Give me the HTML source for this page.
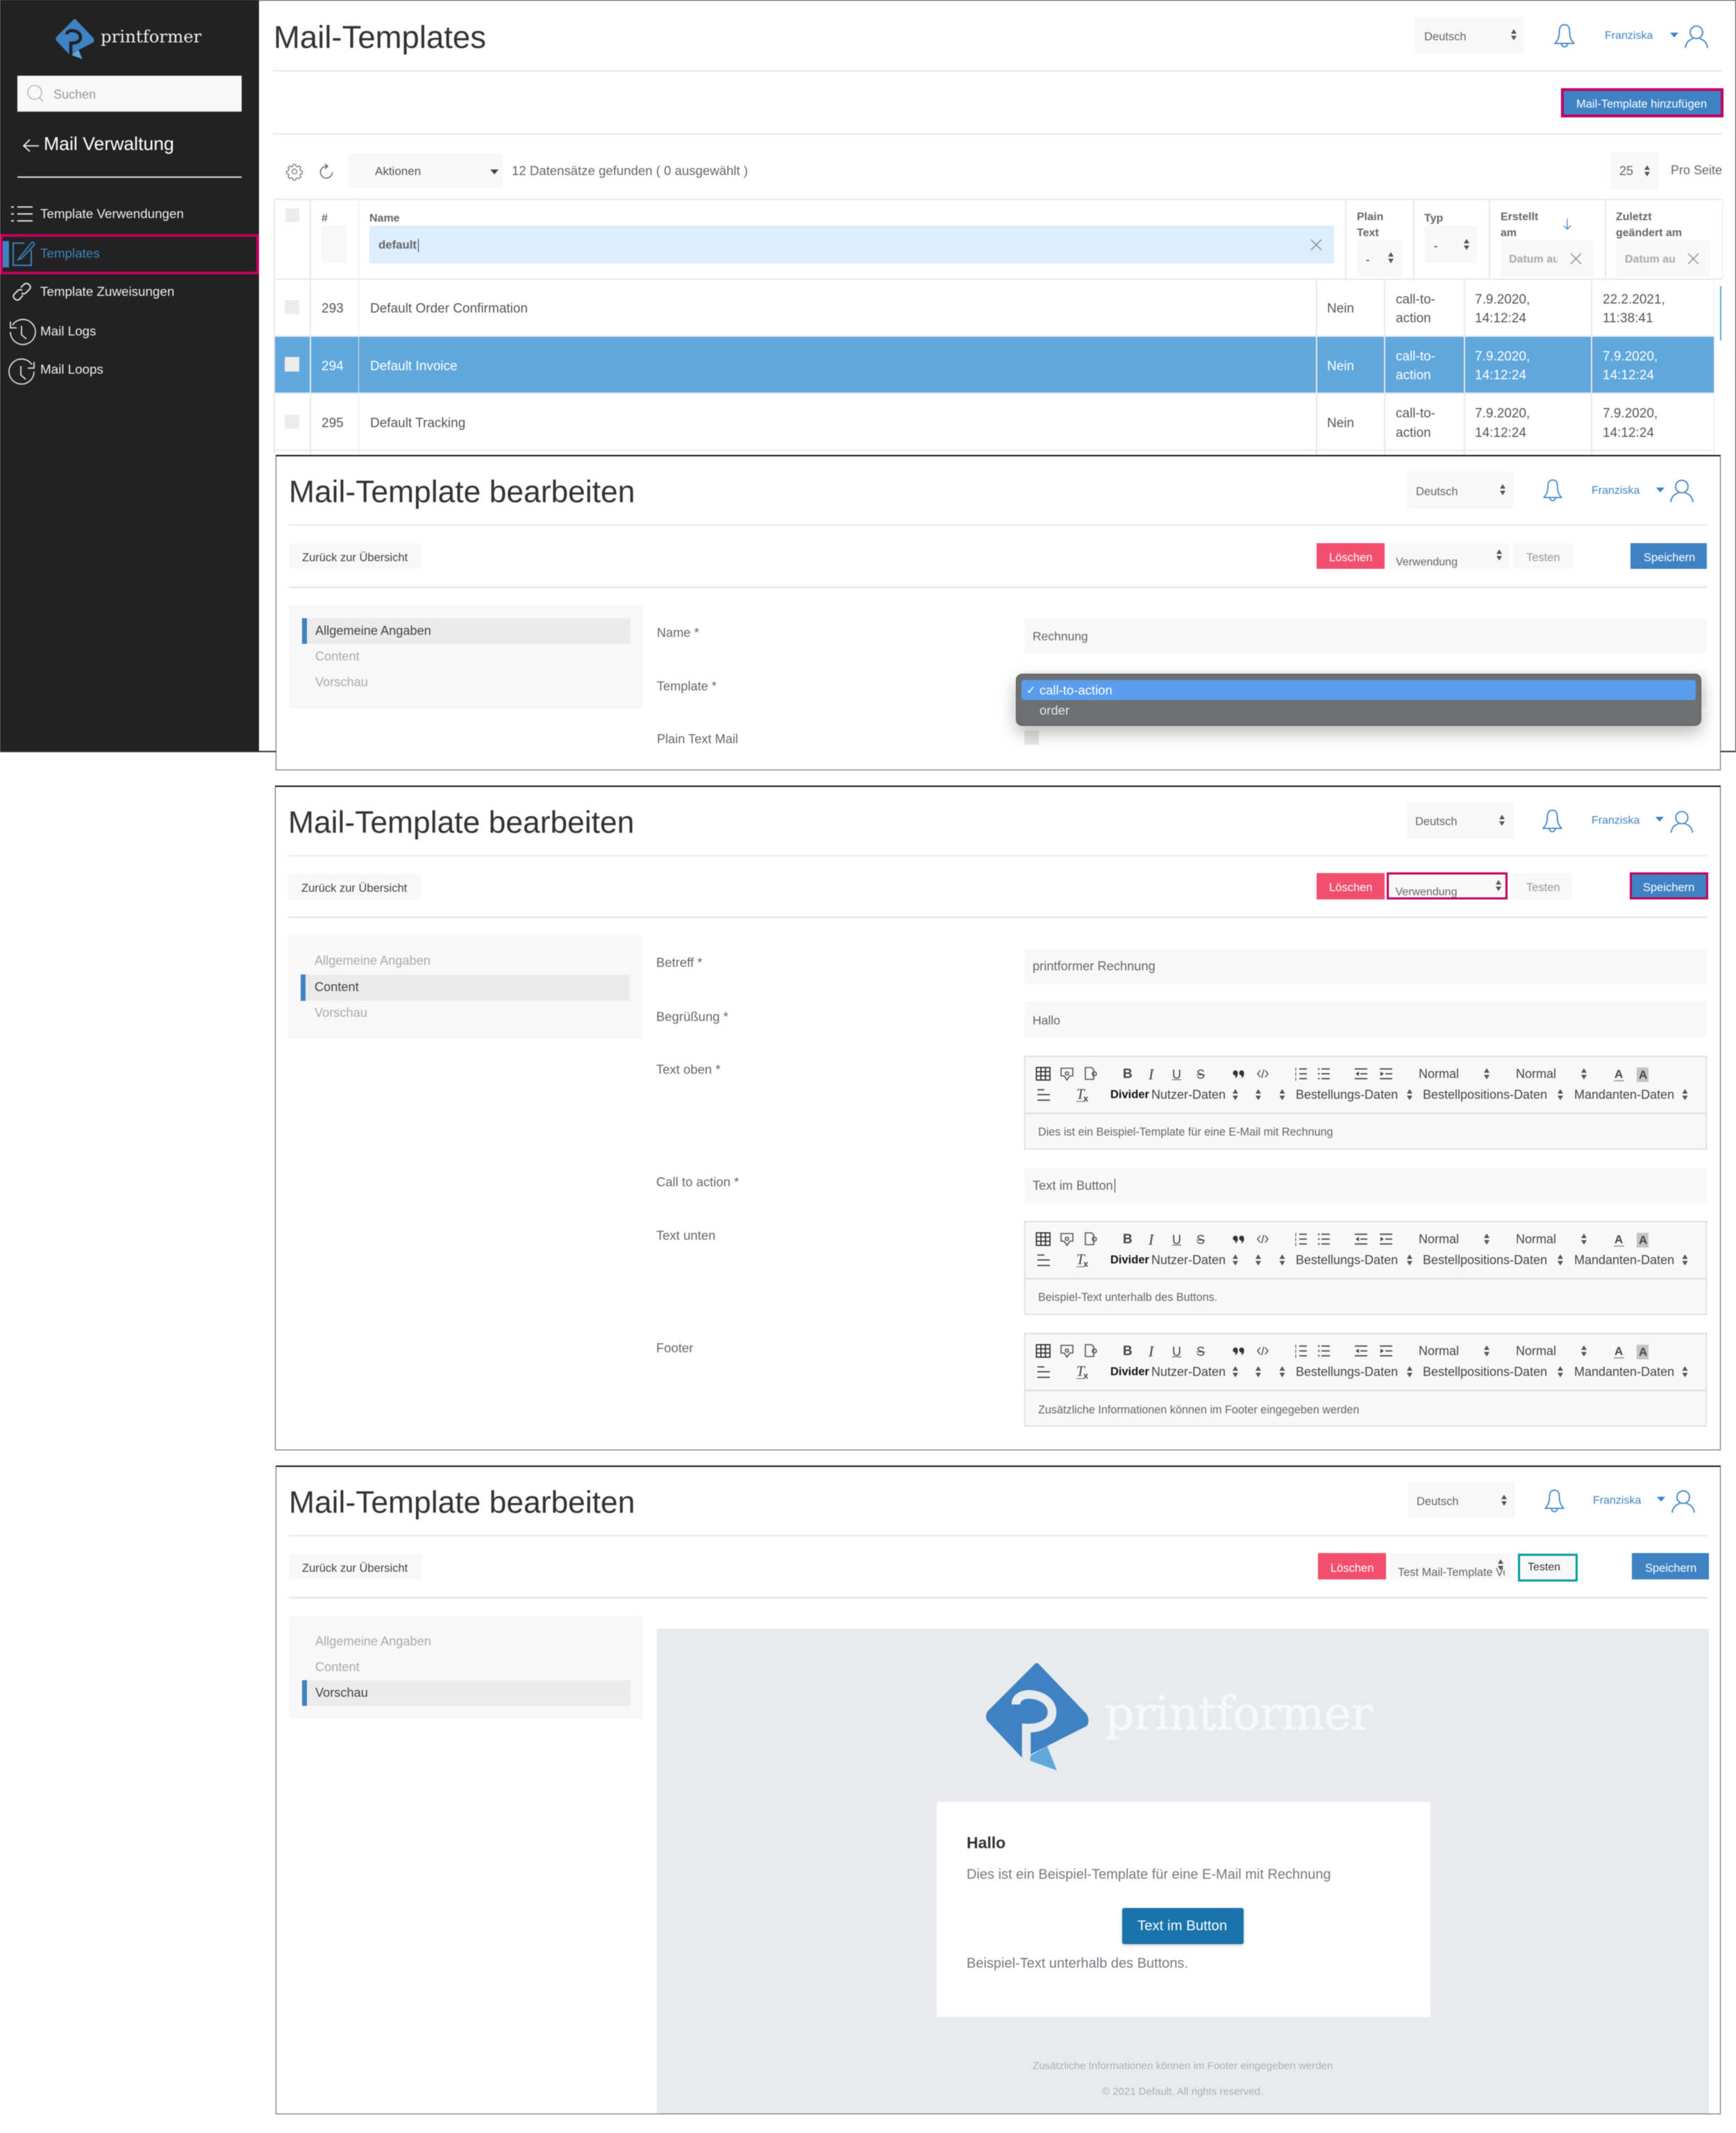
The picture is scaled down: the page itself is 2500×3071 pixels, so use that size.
<!DOCTYPE html>
<html lang="de"><head><meta charset="utf-8"><title>Mail-Templates</title>
<style>
html,body{margin:0;padding:0;width:2500px;height:3071px;overflow:hidden;background:#fff}
#p{position:absolute;left:0;top:0;width:2500px;height:3071px;overflow:hidden;font:18px "Liberation Sans",sans-serif;color:#666;filter:blur(.55px)}
.x{position:absolute}
.t{position:absolute;white-space:nowrap;line-height:0;height:0}
.g{background:#f8f8f8}.l{background:#e9e9e9}.bl{background:#3f82c4}.rd{background:#f24f6e}
.h{font-size:44.400px;color:#333;margin-top:1px}
.w{color:#fff}.s{font-size:16.5px;margin-top:1.5px}.bd{font-weight:700;font-size:16px;color:#666;margin-top:1.5px}
.b{color:#3f82c4;font-size:16px;margin-top:1.5px}
.m{font-size:18.800px;color:#eee}
.c{font-size:19px;color:#555;margin-top:1.5px}
.cw{font-size:19px;color:#fff;margin-top:1.5px}
.lb{font-size:18.200px;color:#666}
.ni{font-size:18.200px;color:#aaa}.na{font-size:18.200px;color:#444}
.v{font-size:17.5px;color:#666}.v2{font-size:18.300px;color:#666}
svg{position:absolute;overflow:visible}
.ed{position:absolute;left:1475px;width:983px;background:#f8f8f8;box-shadow:inset 0 0 0 1.5px #d8d8d8}
.ed .t{font-size:18px;color:#444}
.ed .d{font-weight:700;font-size:16.5px;color:#111}
.ed .n{left:20px;top:109.500px;font-size:16.200px;color:#666}
.ed .sp{position:absolute;left:0;top:82px;width:983px;height:2px;background:#ddd}
</style></head><body>
<svg width="0" height="0" style="position:absolute">
<symbol id="ud" viewBox="0 0 8 16"><path d="M4 0L8 6.500H0zM4 16L8 9.500H0z" fill="#555"/></symbol>
<symbol id="car" viewBox="0 0 12 7"><path d="M0 0H12L6 7z" fill="currentColor"/></symbol>
<symbol id="bell" viewBox="0 0 30 35"><path d="M15 1.500C8 1.500 7.500 8 7.500 14 7.500 21 4 25 1.500 28.500H28.500C26 25 22.500 21 22.500 14 22.500 8 22 1.500 15 1.500ZM10.500 28.500a4.500 5 0 0 0 9 0" fill="none" stroke="#3f82c4" stroke-width="1.800"/></symbol>
<symbol id="user" viewBox="0 0 34 33"><circle cx="17" cy="10.500" r="9" fill="none" stroke="#3f82c4" stroke-width="1.800"/><path d="M1 33C2 25 7 21 12.500 19.500M33 33C32 25 27 21 21.500 19.500" fill="none" stroke="#3f82c4" stroke-width="1.800"/></symbol>
<symbol id="xx" viewBox="0 0 17 17"><path d="M1 1L16 16M16 1L1 16" stroke="#888" stroke-width="1.300" fill="none"/></symbol>
<symbol id="logo" viewBox="0 0 148 155">
<path d="M63.500 134L88 120L102 155L63.500 141Z" fill="#60a7dc"/>
<path d="M69 3Q73 -2 77 3L145 74Q150 84 145 91L64 132L52 137L2 84Q-2 78 2 70Z" fill="#3f82c4"/>
<path d="M43 60C43 49 54 44 68 46C86 49 96 60 95 73C94 87 78 95 58 94L58 137" fill="none" stroke="currentColor" stroke-width="12.500"/>
</symbol>
<symbol id="tb" viewBox="0 0 983 82">
<g fill="none" stroke="#222" stroke-width="1.600"><rect x="17.500" y="17" width="19.500" height="18"/><path d="M24 17V35M30.500 17V35M17.500 23H37M17.500 29H37"/></g>
<g fill="none" stroke="#555" stroke-width="1.600"><path d="M53 18H70V29H65.500L61.500 35 57.500 29H53Z"/><circle cx="61.500" cy="25.500" r="2.300"/><path d="M88 17H97L100 20V34H88Z"/><circle cx="101" cy="26" r="3"/></g>
<path d="M304 21a3.500 3.500 0 0 1 3.500 3.500v2c0 3-2 5-4 5.500l1-3.500a3.500 3.500 0 0 1-.5-7.500zM313 21a3.500 3.500 0 0 1 3.500 3.500v2c0 3-2 5-4 5.500l1-3.500a3.500 3.500 0 0 1-.5-7.500z" fill="#333"/>
<path d="M340 21L336 26 340 31M347 21L351 26 347 31M345 20L342 32" fill="none" stroke="#444" stroke-width="1.400"/>
<g fill="none" stroke="#444" stroke-width="1.800"><path d="M396 19h11M396 26h11M396 33h11"/><path d="M428 19h12M428 26h12M428 33h12M423 19h2.500M423 26h2.500M423 33h2.500"/><path d="M476 19h18M484 26h10M476 33h18M512 19h18M520 26h10M512 33h18"/><path d="M19 49h10M19 56h18M19 64h18"/></g>
<path d="M391 17v5M391 24v5M391 31v5" fill="none" stroke="#444" stroke-width="1"/>
<path d="M482 23L477 26 482 29zM513 23L518 26 513 29z" fill="#444"/>
<rect x="849" y="35" width="15" height="2" fill="#aaa"/>
<rect x="882" y="17" width="17" height="21" fill="#c4c4c4"/>
<rect x="75" y="65" width="12" height="1.500" fill="#999"/>
<use href="#ud" x="662" y="18" width="8" height="16"/><use href="#ud" x="802" y="18" width="8" height="16"/>
<use href="#ud" x="300" y="48" width="8" height="16"/><use href="#ud" x="333" y="48" width="8" height="16"/><use href="#ud" x="367.500" y="48" width="8" height="16"/><use href="#ud" x="551" y="48" width="8" height="16"/><use href="#ud" x="768" y="48" width="8" height="16"/><use href="#ud" x="947.500" y="48" width="8" height="16"/>
</symbol>
</svg>
<div id="p">

<!-- first screenshot frame -->
<div class="x" style="left:0;top:0;width:2498px;height:1081px;border:1px solid #333"></div>

<!-- header -->
<div class="t h" style="left:394px;top:53px;font-size:45.500px">Mail-Templates</div>
<div class="x l" style="left:393px;top:101px;width:2087px;height:2px"></div>
<div class="x l" style="left:393px;top:192px;width:2087px;height:2px"></div>
<div class="x g" style="left:2038px;top:24px;width:157px;height:53px"></div>
<div class="t s" style="left:2051px;top:51px">Deutsch</div>
<svg style="left:2176px;top:42px" width="8" height="16"><use href="#ud"/></svg>
<svg style="left:2238px;top:34px" width="30" height="35"><use href="#bell"/></svg>
<div class="t b" style="left:2311px;top:50px">Franziska</div>
<svg style="left:2405px;top:47px;color:#3f82c4" width="12" height="7"><use href="#car"/></svg>
<svg style="left:2426px;top:36px" width="34" height="33"><use href="#user"/></svg>
<div class="x" style="left:2248px;top:127px;width:234px;height:42px;box-sizing:border-box;border:4px solid #c2005d;background:#3f82c4"></div>
<div class="t w s" style="left:2270px;top:148px">Mail-Template hinzufügen</div>

<!-- toolbar -->
<svg style="left:412px;top:235px" width="25" height="24" viewBox="-1 -1 27 27"><path d="M10 1h4l.6 3 2.400 1 2.600-1.700 2.800 2.800-1.700 2.600 1 2.400 3 .6v4l-3 .6-1 2.400 1.700 2.600-2.800 2.800-2.600-1.700-2.400 1-.6 3h-4l-.6-3-2.400-1-2.600 1.700-2.800-2.800 1.700-2.600-1-2.400-3-.6v-4l3-.6 1-2.400-1.700-2.600 2.800-2.800 2.600 1.700 2.400-1z" fill="none" stroke="#666" stroke-width="1.300"/><circle cx="12" cy="12.500" r="4" fill="none" stroke="#666" stroke-width="1.300"/></svg>
<svg style="left:460px;top:235px" width="20" height="24"><path d="M11 4.500A8.500 8.500 0 1 0 18.500 13" fill="none" stroke="#666" stroke-width="1.500"/><path d="M8 1l4 3.500-4 3.500" fill="none" stroke="#666" stroke-width="1.500"/></svg>
<div class="x g" style="left:501px;top:221px;width:223px;height:50px"></div>
<div class="t" style="left:540px;top:247px;font-size:17px;color:#555">Aktionen</div>
<svg style="left:706px;top:244px;color:#444" width="12" height="7"><use href="#car"/></svg>
<div class="t" style="left:737px;top:246px;font-size:18.600px">12 Datensätze gefunden ( 0 ausgewählt )</div>
<div class="x g" style="left:2319px;top:219px;width:69px;height:54px"></div>
<div class="t" style="left:2332px;top:246px;font-size:18px">25</div>
<svg style="left:2368px;top:238px" width="8" height="16"><use href="#ud"/></svg>
<div class="t" style="left:2406px;top:245px;font-size:18px">Pro Seite</div>

<!-- table head -->
<div class="x l" style="left:394px;top:286px;width:2086px;height:2px"></div>
<div class="x l" style="left:394px;top:401px;width:2086px;height:2px"></div>
<div class="x l" style="left:394px;top:287px;width:1.500px;height:115px"></div>
<div class="x l" style="left:446px;top:287px;width:1.500px;height:115px"></div>
<div class="x l" style="left:515.500px;top:287px;width:1.500px;height:115px"></div>
<div class="x l" style="left:1937px;top:287px;width:1.500px;height:115px"></div>
<div class="x l" style="left:2035px;top:287px;width:1.500px;height:115px"></div>
<div class="x l" style="left:2144px;top:287px;width:1.500px;height:115px"></div>
<div class="x l" style="left:2311px;top:287px;width:1.500px;height:115px"></div>
<div class="x l" style="left:2479.500px;top:287px;width:1.500px;height:115px"></div>
<div class="x" style="left:411px;top:300px;width:20px;height:20px;background:#ececec"></div>
<div class="t bd" style="left:463px;top:313px">#</div>
<div class="x g" style="left:463px;top:325px;width:36px;height:54px"></div>
<div class="t bd" style="left:532px;top:313px">Name</div>
<div class="x" style="left:532px;top:325px;width:1389px;height:54px;background:#dcedfd"></div>
<div class="t" style="left:545px;top:353px;font-size:16.800px;font-weight:700;color:#666">default</div>
<div class="x" style="left:602px;top:344px;width:1px;height:19px;background:#333"></div>
<svg style="left:1887px;top:344px" width="17" height="17"><use href="#xx"/></svg>
<div class="t bd" style="left:1954px;top:311px">Plain</div>
<div class="t bd" style="left:1954px;top:334px">Text</div>
<div class="x g" style="left:1954px;top:345px;width:65px;height:54px"></div>
<div class="t bd" style="left:1967px;top:373px">-</div>
<svg style="left:1999px;top:363px" width="8" height="16"><use href="#ud"/></svg>
<div class="t bd" style="left:2051px;top:313px">Typ</div>
<div class="x g" style="left:2051px;top:325px;width:76px;height:54px"></div>
<div class="t bd" style="left:2065px;top:353px">-</div>
<svg style="left:2108px;top:344px" width="8" height="16"><use href="#ud"/></svg>
<div class="t bd" style="left:2161px;top:311px">Erstellt</div>
<div class="t bd" style="left:2161px;top:334px">am</div>
<svg style="left:2251px;top:315px" width="12" height="16"><path d="M6 0V15M1 10L6 15 11 10" fill="none" stroke="#3f82c4" stroke-width="1.300"/></svg>
<div class="x g" style="left:2161px;top:345px;width:134px;height:54px"></div>
<div class="x" style="left:2173px;top:360px;width:70px;height:26px;overflow:hidden"><div class="t" style="left:0;top:14px;font-size:16px;font-weight:700;color:#aaa">Datum aus</div></div>
<svg style="left:2261px;top:364px" width="17" height="17"><use href="#xx"/></svg>
<div class="t bd" style="left:2327px;top:311px">Zuletzt</div>
<div class="t bd" style="left:2327px;top:334px">geändert am</div>
<div class="x g" style="left:2327px;top:345px;width:136px;height:54px"></div>
<div class="x" style="left:2340px;top:360px;width:73px;height:26px;overflow:hidden"><div class="t" style="left:0;top:14px;font-size:16px;font-weight:700;color:#aaa">Datum aus</div></div>
<svg style="left:2430px;top:364px" width="17" height="17"><use href="#xx"/></svg>

<!-- table body -->
<div class="x" style="left:394px;top:484px;width:2074px;height:82px;background:#60a7dc"></div>
<div class="x l" style="left:394px;top:483px;width:2074px;height:2px"></div>
<div class="x" style="left:394px;top:565px;width:2074px;height:2px;background:#dfe7ee"></div>
<div class="x l" style="left:394px;top:647px;width:2074px;height:2px"></div>
<div class="x l" style="left:394px;top:402px;width:1.500px;height:253px"></div>
<div class="x" style="left:446px;top:402px;width:1.500px;height:253px;background:#e6e9ec"></div>
<div class="x" style="left:515.500px;top:402px;width:1.500px;height:253px;background:#e6e9ec"></div>
<div class="x" style="left:1895px;top:402px;width:1.500px;height:253px;background:#e6e9ec"></div>
<div class="x" style="left:1993px;top:402px;width:1.500px;height:253px;background:#e6e9ec"></div>
<div class="x" style="left:2108px;top:402px;width:1.500px;height:253px;background:#e6e9ec"></div>
<div class="x" style="left:2291px;top:402px;width:1.500px;height:253px;background:#e6e9ec"></div>
<div class="x l" style="left:2467.500px;top:402px;width:1.500px;height:253px"></div>
<div class="x" style="left:2477px;top:412px;width:2px;height:78px;background:#5fa3d8"></div>
<div class="x" style="left:410px;top:432px;width:21px;height:20px;background:#ececec"></div>
<div class="x" style="left:410px;top:514px;width:21px;height:21px;background:#ececec"></div>
<div class="x" style="left:410px;top:597px;width:21px;height:20px;background:#ececec"></div>

<div class="t c" style="left:463px;top:443px">293</div>
<div class="t c" style="left:533px;top:443px">Default Order Confirmation</div>
<div class="t c" style="left:1911px;top:443px">Nein</div>
<div class="t c" style="left:2010px;top:430px">call-to-</div>
<div class="t c" style="left:2010px;top:457px">action</div>
<div class="t c" style="left:2124px;top:430px">7.9.2020,</div>
<div class="t c" style="left:2124px;top:457px">14:12:24</div>
<div class="t c" style="left:2308px;top:430px">22.2.2021,</div>
<div class="t c" style="left:2308px;top:457px">11:38:41</div>

<div class="t cw" style="left:463px;top:526px">294</div>
<div class="t cw" style="left:533px;top:526px">Default Invoice</div>
<div class="t cw" style="left:1911px;top:526px">Nein</div>
<div class="t cw" style="left:2010px;top:512px">call-to-</div>
<div class="t cw" style="left:2010px;top:539px">action</div>
<div class="t cw" style="left:2124px;top:512px">7.9.2020,</div>
<div class="t cw" style="left:2124px;top:539px">14:12:24</div>
<div class="t cw" style="left:2308px;top:512px">7.9.2020,</div>
<div class="t cw" style="left:2308px;top:539px">14:12:24</div>

<div class="t c" style="left:463px;top:608px">295</div>
<div class="t c" style="left:533px;top:608px">Default Tracking</div>
<div class="t c" style="left:1911px;top:608px">Nein</div>
<div class="t c" style="left:2010px;top:594px">call-to-</div>
<div class="t c" style="left:2010px;top:622px">action</div>
<div class="t c" style="left:2124px;top:594px">7.9.2020,</div>
<div class="t c" style="left:2124px;top:622px">14:12:24</div>
<div class="t c" style="left:2308px;top:594px">7.9.2020,</div>
<div class="t c" style="left:2308px;top:622px">14:12:24</div>

<!-- sidebar -->
<div class="x" style="left:0;top:0;width:373px;height:1082px;background:#222;border-top:1px solid #000;box-sizing:border-box"></div>
<svg style="left:79px;top:27px;color:#222" width="58" height="58"><use href="#logo" width="58" height="58"/></svg>
<div class="t" style="left:145px;top:53px;font:24.400px 'DejaVu Serif',serif;line-height:0;color:#eee">printformer</div>
<div class="x" style="left:25px;top:109px;width:323px;height:52px;background:#f8f8f8;border-bottom:1px solid #bbb;box-sizing:border-box"></div>
<svg style="left:0;top:0" width="373" height="600">
<circle cx="50" cy="133" r="10" fill="none" stroke="#aaa" stroke-width="1.300"/><path d="M57 141L62 146" stroke="#aaa" stroke-width="1.300"/>
<path d="M34 210H56M43 201L34 210 43 218" fill="none" stroke="#eee" stroke-width="1.800"/>
<path d="M25 298H47M25 308H47M25 318H47" stroke="#ddd" stroke-width="2"/><path d="M16 298H20M16 308H20M16 318H20" stroke="#ddd" stroke-width="2"/>
<path d="M35 350H19V382H45V360" fill="none" stroke="#3f82c4" stroke-width="2"/><path d="M28 371L44 351Q47 347 49 350 50 352 48 354L31 372 26 374Z" fill="none" stroke="#3f82c4" stroke-width="1.800"/>
<g fill="none" stroke="#ddd" stroke-width="2"><path d="M30 414L35 409Q38 407 41 409L43 411Q45 414 42 417L37 422Q34 424 31 422"/><path d="M33 425L28 431Q25 433 22 431L20 429Q18 426 21 423L26 418Q29 416 32 418"/></g>
<g fill="none" stroke="#ddd" stroke-width="1.800"><path d="M18 468A18 18 0 1 1 15 478"/><path d="M15 463V472H24"/><path d="M31 469V482L38 488"/><path d="M46 525A18 18 0 1 0 49 535"/><path d="M49 521V530H40"/><path d="M30 527V540L37 546"/></g>
</svg>
<div class="t" style="left:77px;top:136px;font-size:18px;color:#999">Suchen</div>
<div class="t" style="left:63px;top:207px;font-size:26.600px;color:#fff">Mail Verwaltung</div>
<div class="x" style="left:25px;top:254px;width:323px;height:2px;background:#ddd"></div>
<div class="x" style="left:0;top:337px;width:373px;height:58px;box-sizing:border-box;border:4.500px solid #c2005d"></div>
<div class="x bl" style="left:4px;top:347px;width:9px;height:38px"></div>
<div class="t m" style="left:58px;top:308px">Template Verwendungen</div>
<div class="t m" style="left:58px;top:365px;color:#3f82c4">Templates</div>
<div class="t m" style="left:58px;top:420px">Template Zuweisungen</div>
<div class="t m" style="left:58px;top:477px">Mail Logs</div>
<div class="t m" style="left:58px;top:532px">Mail Loops</div>
<div class="x" style="left:0;top:1081px;width:2499px;height:1px;background:#333"></div>

<!-- panel 2 -->
<div class="x" style="left:397px;top:655px;width:2081px;height:454px;box-sizing:border-box;background:#fff;border:1.500px solid #555;border-top:2.500px solid #111"></div>
<div class="t h" style="left:416px;top:708px">Mail-Template bearbeiten</div>
<div class="x l" style="left:416px;top:755px;width:2042px;height:2px"></div>
<div class="x g" style="left:2026px;top:679px;width:154px;height:53px"></div>
<div class="t s" style="left:2039px;top:706px">Deutsch</div>
<svg style="left:2160px;top:697px" width="8" height="16"><use href="#ud"/></svg>
<svg style="left:2222px;top:689px" width="28" height="34"><use href="#bell" width="28" height="34"/></svg>
<div class="t b" style="left:2292px;top:705px">Franziska</div>
<svg style="left:2385px;top:702px;color:#3f82c4" width="12" height="7"><use href="#car"/></svg>
<svg style="left:2405px;top:690px" width="34" height="33"><use href="#user"/></svg>
<div class="x g" style="left:416px;top:782px;width:192px;height:37px"></div>
<div class="t s" style="left:435px;top:801px;color:#444">Zurück zur Übersicht</div>
<div class="x rd" style="left:1896px;top:782px;width:98px;height:37px"></div>
<div class="t w s" style="left:1914px;top:801px">Löschen</div>
<div class="x g" style="left:2000px;top:782px;width:174px;height:37px"></div>
<div class="t" style="left:2010px;top:810px;font-size:16px">Verwendung</div>
<svg style="left:2155px;top:791px" width="8" height="16"><use href="#ud"/></svg>
<div class="x g" style="left:2179px;top:782px;width:86px;height:37px"></div>
<div class="t s" style="left:2198px;top:801px;color:#999">Testen</div>
<div class="x bl" style="left:2348px;top:782px;width:110px;height:37px"></div>
<div class="t w s" style="left:2367px;top:801px">Speichern</div>
<div class="x l" style="left:416px;top:844px;width:2042px;height:2.500px"></div>
<div class="x g" style="left:416px;top:871px;width:510px;height:149px"></div>
<div class="x" style="left:435px;top:890px;width:473px;height:37px;background:#ebebeb"></div>
<div class="x bl" style="left:435px;top:890px;width:7px;height:37px"></div>
<div class="t na" style="left:454px;top:908px">Allgemeine Angaben</div>
<div class="t ni" style="left:454px;top:945px">Content</div>
<div class="t ni" style="left:454px;top:982px">Vorschau</div>
<div class="t lb" style="left:946px;top:911px">Name *</div>
<div class="t lb" style="left:946px;top:988px">Template *</div>
<div class="t lb" style="left:946px;top:1064px">Plain Text Mail</div>
<div class="x g" style="left:1475px;top:890px;width:983px;height:51px"></div>
<div class="t v" style="left:1487px;top:916px">Rechnung</div>
<div class="x g" style="left:1475px;top:966px;width:983px;height:51px"></div>
<div class="x" style="left:1475px;top:1052px;width:21px;height:20px;background:#e6e6e6"></div>
<div class="x" style="left:1463px;top:970px;width:987px;height:75px;box-sizing:border-box;background:#6c7073;border:1.500px solid #555;border-radius:9px;box-shadow:0 10px 24px rgba(0,0,0,.28)"></div>
<div class="x" style="left:1471px;top:979px;width:971px;height:29px;background:#5a9ded;border-radius:4px"></div>
<div class="t w" style="left:1478px;top:995px;font-size:16px">✓</div>
<div class="t w" style="left:1497px;top:994px;font-size:18.500px">call-to-action</div>
<div class="t" style="left:1497px;top:1023px;font-size:18.500px;color:#e4e4e4">order</div>

<!-- panel 3 -->
<div class="x" style="left:396px;top:1131px;width:2082px;height:957px;box-sizing:border-box;background:#fff;border:1.500px solid #555;border-top:2px solid #111"></div>
<div class="t h" style="left:415px;top:1184px">Mail-Template bearbeiten</div>
<div class="x l" style="left:415px;top:1231px;width:2043px;height:2px"></div>
<div class="x g" style="left:2025.500px;top:1155px;width:154px;height:53px"></div>
<div class="t s" style="left:2038px;top:1181px">Deutsch</div>
<svg style="left:2159px;top:1173px" width="8" height="16"><use href="#ud"/></svg>
<svg style="left:2221px;top:1165px" width="29" height="34"><use href="#bell" width="29" height="34"/></svg>
<div class="t b" style="left:2292px;top:1180px">Franziska</div>
<svg style="left:2384px;top:1176px;color:#3f82c4" width="12" height="7"><use href="#car"/></svg>
<svg style="left:2405px;top:1167px" width="34" height="32"><use href="#user" width="34" height="32"/></svg>
<div class="x g" style="left:415px;top:1258px;width:191px;height:37px"></div>
<div class="t s" style="left:434px;top:1277px;color:#444">Zurück zur Übersicht</div>
<div class="x rd" style="left:1896px;top:1257px;width:98px;height:38px"></div>
<div class="t w s" style="left:1914px;top:1276px">Löschen</div>
<div class="x" style="left:1996.500px;top:1256px;width:174.500px;height:39px;box-sizing:border-box;border:3.500px solid #c2005d;background:#f8f8f8;overflow:hidden"><div class="t" style="left:10px;top:26px;font-size:16px">Verwendung</div></div>
<svg style="left:2154px;top:1267px" width="8" height="16"><use href="#ud"/></svg>
<div class="x g" style="left:2178px;top:1257px;width:86px;height:38px"></div>
<div class="t s" style="left:2198px;top:1276px;color:#999">Testen</div>
<div class="x" style="left:2346.500px;top:1256px;width:113.500px;height:39px;box-sizing:border-box;border:3.500px solid #c2005d;background:#3f82c4"></div>
<div class="t w s" style="left:2366px;top:1276px">Speichern</div>
<div class="x l" style="left:415px;top:1319px;width:2043px;height:2.500px"></div>
<div class="x g" style="left:415px;top:1346px;width:510px;height:150px"></div>
<div class="x" style="left:433px;top:1403px;width:474px;height:38px;background:#ebebeb"></div>
<div class="x bl" style="left:433px;top:1403px;width:7px;height:38px"></div>
<div class="t ni" style="left:453px;top:1383px">Allgemeine Angaben</div>
<div class="t na" style="left:453px;top:1421px">Content</div>
<div class="t ni" style="left:453px;top:1458px">Vorschau</div>
<div class="t lb" style="left:945px;top:1386px;font-size:18.500px">Betreff *</div>
<div class="t lb" style="left:945px;top:1464px;font-size:18.500px">Begrüßung *</div>
<div class="t lb" style="left:945px;top:1540px;font-size:18.500px">Text oben *</div>
<div class="t lb" style="left:945px;top:1702px;font-size:18.500px">Call to action *</div>
<div class="t lb" style="left:945px;top:1779px;font-size:18.500px">Text unten</div>
<div class="t lb" style="left:945px;top:1941px;font-size:18.500px">Footer</div>
<div class="x g" style="left:1475px;top:1366px;width:983px;height:51px"></div>
<div class="t v2" style="left:1487px;top:1391px">printformer Rechnung</div>
<div class="x g" style="left:1475px;top:1442px;width:983px;height:52px"></div>
<div class="t v" style="left:1487px;top:1469px">Hallo</div>
<div class="x g" style="left:1475px;top:1681px;width:983px;height:52px"></div>
<div class="t v2" style="left:1487px;top:1707px">Text im Button</div>
<div class="x" style="left:1605px;top:1697px;width:1px;height:20px;background:#333"></div>

<div class="ed" style="top:1520px;height:135px"><div class="sp"></div>
<svg style="left:0;top:0" width="983" height="82"><use href="#tb"/></svg>
<span class="t" style="left:142px;top:27px;font-weight:700;font-size:19px">B</span><span class="t" style="left:179px;top:27px;font:italic 22px 'Liberation Serif',serif;line-height:0">I</span><span class="t" style="left:213px;top:27px;text-decoration:underline;font-size:18px">U</span><span class="t" style="left:248px;top:27px;text-decoration:line-through;font-size:18px">S</span>
<span class="t" style="left:568px;top:26px">Normal</span><span class="t" style="left:708px;top:26px">Normal</span>
<span class="t" style="left:850px;top:27px;font-weight:700;font-size:17px">A</span><span class="t" style="left:885px;top:28px;font-weight:700;font-size:17px">A</span>
<span class="t" style="left:75px;top:55px;font:italic 21px 'Liberation Serif',serif;line-height:0">T</span><span class="t" style="left:85px;top:62px;font-size:13px;font-weight:700">x</span>
<span class="t d" style="left:124px;top:56px">Divider</span><span class="t" style="left:183px;top:56px">Nutzer-Daten</span><span class="t" style="left:391px;top:56px">Bestellungs-Daten</span><span class="t" style="left:574px;top:56px">Bestellpositions-Daten</span><span class="t" style="left:792px;top:56px">Mandanten-Daten</span>
<span class="t n">Dies ist ein Beispiel-Template für eine E-Mail mit Rechnung</span></div>

<div class="ed" style="top:1758px;height:135px"><div class="sp"></div>
<svg style="left:0;top:0" width="983" height="82"><use href="#tb"/></svg>
<span class="t" style="left:142px;top:27px;font-weight:700;font-size:19px">B</span><span class="t" style="left:179px;top:27px;font:italic 22px 'Liberation Serif',serif;line-height:0">I</span><span class="t" style="left:213px;top:27px;text-decoration:underline;font-size:18px">U</span><span class="t" style="left:248px;top:27px;text-decoration:line-through;font-size:18px">S</span>
<span class="t" style="left:568px;top:26px">Normal</span><span class="t" style="left:708px;top:26px">Normal</span>
<span class="t" style="left:850px;top:27px;font-weight:700;font-size:17px">A</span><span class="t" style="left:885px;top:28px;font-weight:700;font-size:17px">A</span>
<span class="t" style="left:75px;top:55px;font:italic 21px 'Liberation Serif',serif;line-height:0">T</span><span class="t" style="left:85px;top:62px;font-size:13px;font-weight:700">x</span>
<span class="t d" style="left:124px;top:56px">Divider</span><span class="t" style="left:183px;top:56px">Nutzer-Daten</span><span class="t" style="left:391px;top:56px">Bestellungs-Daten</span><span class="t" style="left:574px;top:56px">Bestellpositions-Daten</span><span class="t" style="left:792px;top:56px">Mandanten-Daten</span>
<span class="t n">Beispiel-Text unterhalb des Buttons.</span></div>

<div class="ed" style="top:1919px;height:135px"><div class="sp"></div>
<svg style="left:0;top:0" width="983" height="82"><use href="#tb"/></svg>
<span class="t" style="left:142px;top:27px;font-weight:700;font-size:19px">B</span><span class="t" style="left:179px;top:27px;font:italic 22px 'Liberation Serif',serif;line-height:0">I</span><span class="t" style="left:213px;top:27px;text-decoration:underline;font-size:18px">U</span><span class="t" style="left:248px;top:27px;text-decoration:line-through;font-size:18px">S</span>
<span class="t" style="left:568px;top:26px">Normal</span><span class="t" style="left:708px;top:26px">Normal</span>
<span class="t" style="left:850px;top:27px;font-weight:700;font-size:17px">A</span><span class="t" style="left:885px;top:28px;font-weight:700;font-size:17px">A</span>
<span class="t" style="left:75px;top:55px;font:italic 21px 'Liberation Serif',serif;line-height:0">T</span><span class="t" style="left:85px;top:62px;font-size:13px;font-weight:700">x</span>
<span class="t d" style="left:124px;top:56px">Divider</span><span class="t" style="left:183px;top:56px">Nutzer-Daten</span><span class="t" style="left:391px;top:56px">Bestellungs-Daten</span><span class="t" style="left:574px;top:56px">Bestellpositions-Daten</span><span class="t" style="left:792px;top:56px">Mandanten-Daten</span>
<span class="t n" style="top:110.500px">Zusätzliche Informationen können im Footer eingegeben werden</span></div>

<!-- panel 4 -->
<div class="x" style="left:397px;top:2110px;width:2081px;height:934px;box-sizing:border-box;background:#fff;border:1.500px solid #555;border-top:2px solid #111"></div>
<div class="t h" style="left:416px;top:2163px">Mail-Template bearbeiten</div>
<div class="x l" style="left:416px;top:2210px;width:2044px;height:2px"></div>
<div class="x g" style="left:2028px;top:2133px;width:154px;height:53px"></div>
<div class="t s" style="left:2040px;top:2160px">Deutsch</div>
<svg style="left:2162px;top:2152px" width="8" height="16"><use href="#ud"/></svg>
<svg style="left:2224px;top:2144px" width="29" height="34"><use href="#bell" width="29" height="34"/></svg>
<div class="t b" style="left:2294px;top:2159px">Franziska</div>
<svg style="left:2386px;top:2155px;color:#3f82c4" width="12" height="7"><use href="#car"/></svg>
<svg style="left:2407px;top:2145px" width="34" height="33"><use href="#user"/></svg>
<div class="x g" style="left:416px;top:2237px;width:192px;height:37px"></div>
<div class="t s" style="left:435px;top:2256px;color:#444">Zurück zur Übersicht</div>
<div class="x rd" style="left:1897.500px;top:2236px;width:98.500px;height:38px"></div>
<div class="t w s" style="left:1916px;top:2256px">Löschen</div>
<div class="x g" style="left:2001.500px;top:2236px;width:174.500px;height:38px"></div>
<div class="x" style="left:2013px;top:2250px;width:154px;height:24px;overflow:hidden"><div class="t" style="left:0;top:13.500px;font-size:16.400px;color:#666">Test Mail-Template Vorschau</div></div>
<svg style="left:2157px;top:2245px" width="8" height="16"><use href="#ud"/></svg>
<div class="x" style="left:2186px;top:2237px;width:86px;height:40px;box-sizing:border-box;border:3.500px solid #009c9c;background:#f8f8f8"></div>
<div class="t s" style="left:2200px;top:2255px;color:#333;font-size:16px">Testen</div>
<div class="x bl" style="left:2350px;top:2236px;width:110.500px;height:38px"></div>
<div class="t w s" style="left:2369px;top:2256px">Speichern</div>
<div class="x l" style="left:416px;top:2299px;width:2044px;height:2.500px"></div>
<div class="x g" style="left:416px;top:2326px;width:510px;height:149px"></div>
<div class="x" style="left:435px;top:2419px;width:473px;height:37px;background:#ebebeb"></div>
<div class="x bl" style="left:435px;top:2419px;width:7px;height:37px"></div>
<div class="t ni" style="left:454px;top:2363px">Allgemeine Angaben</div>
<div class="t ni" style="left:454px;top:2400px">Content</div>
<div class="t na" style="left:454px;top:2437px">Vorschau</div>

<!-- preview -->
<div class="x" style="left:946px;top:2345px;width:1515px;height:698px;background:#e8ebee"></div>
<svg style="left:1420px;top:2394px;color:#e8ebee" width="148" height="155"><use href="#logo" width="148" height="155"/></svg>
<div class="t" style="left:1591px;top:2468px;font:66px 'DejaVu Serif',serif;line-height:0;color:#f7f8f9;letter-spacing:-.7px;-webkit-text-stroke:.7px #f7f8f9">printformer</div>
<div class="x" style="left:1349px;top:2594px;width:711px;height:310px;background:#fff"></div>
<div class="t" style="left:1392px;top:2653px;font-size:23px;font-weight:700;color:#333">Hallo</div>
<div class="t" style="left:1392px;top:2699px;font-size:20px;color:#74787e">Dies ist ein Beispiel-Template für eine E-Mail mit Rechnung</div>
<div class="x" style="left:1616px;top:2747px;width:175px;height:52px;background:#1a73ab;border-radius:3px;box-shadow:0 2px 4px rgba(0,0,0,.2)"></div>
<div class="t" style="left:1638px;top:2773px;font-size:20.400px;color:#fff">Text im Button</div>
<div class="t" style="left:1392px;top:2827px;font-size:20px;color:#74787e">Beispiel-Text unterhalb des Buttons.</div>
<div class="t" style="left:1487px;top:2975px;font-size:15.150px;color:#aeaeae">Zusätzliche Informationen können im Footer eingegeben werden</div>
<div class="t" style="left:1587px;top:3012px;font-size:15px;color:#aeaeae">© 2021 Default. All rights reserved.</div>

</div>
</body></html>
